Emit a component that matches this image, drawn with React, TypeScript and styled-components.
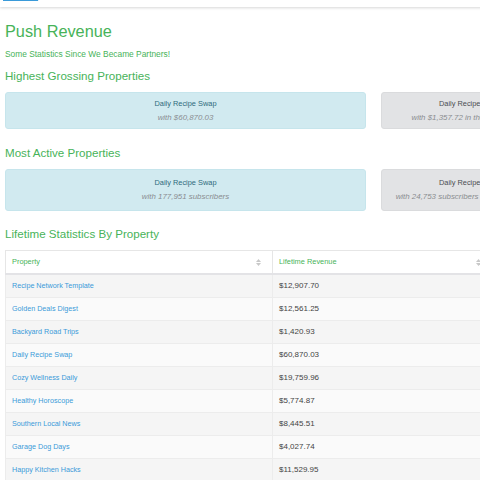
import React from 'react';
import styled, { createGlobalStyle } from 'styled-components';

const GlobalStyle = createGlobalStyle`
  html, body {
    margin: 0;
    padding: 0;
    background: #ffffff;
    overflow: hidden;
  }
  body {
    font-family: 'Liberation Sans', Arial, sans-serif;
    color: #333;
  }
`;

const Page = styled.div`
  width: 1200px;
`;

const NavBar = styled.div`
  height: 7px;
  padding-left: 3px;
  background: #fff;
  box-shadow: 0 1px 3px rgba(0, 0, 0, 0.16);
  overflow: hidden;
`;

const NavLink = styled.a`
  display: block;
  margin-top: -7px;
  font-size: 8px;
  line-height: 8px;
  color: #3a9ad9;
  text-decoration: underline;
`;

const Content = styled.div`
  padding: 14px 5px 0 5px;
`;

const Title = styled.h1`
  margin: 0;
  font-size: 16.3px;
  font-weight: 400;
  color: #47b359;
  line-height: 20px;
`;

const Subtitle = styled.p`
  margin: 8px 0 0;
  font-size: 8.4px;
  line-height: 11px;
  color: #47b359;
`;

const SectionTitle = styled.h3<{ gap: number }>`
  margin: ${({ gap }) => gap}px 0 0;
  font-size: 11.6px;
  font-weight: 400;
  color: #47b359;
  line-height: 16px;
`;

const CardRow = styled.div`
  display: grid;
  grid-template-columns: 361px 178px 178px;
  column-gap: 15px;
  margin-top: 8px;
`;

const Card = styled.div<{ tone: 'info' | 'muted'; tall?: boolean }>`
  background: ${({ tone }) => (tone === 'info' ? '#d1eaf0' : '#e2e3e5')};
  border: 1px solid ${({ tone }) => (tone === 'info' ? '#c6e5ec' : '#dadbdd')};
  border-radius: 3px;
  height: ${({ tall }) => (tall ? '40px' : '35px')};
  display: flex;
  flex-direction: column;
  align-items: center;
  justify-content: center;
  gap: 4px;
  text-align: center;
`;

const CardName = styled.div<{ tone: 'info' | 'muted' }>`
  font-size: 7.4px;
  line-height: 10px;
  color: ${({ tone }) => (tone === 'info' ? '#2f6a7c' : '#4a4e52')};
  white-space: nowrap;
`;

const CardNote = styled.div`
  font-size: 7.9px;
  line-height: 10px;
  font-style: italic;
  color: #8a8d90;
  white-space: nowrap;
`;

const Table = styled.table`
  margin-top: 8px;
  border-collapse: collapse;
  table-layout: fixed;
  width: 787px;
  font-size: 8px;
`;

const HeadCell = styled.th<{ width: number }>`
  box-sizing: border-box;
  width: ${({ width }) => width}px;
  height: 23px;
  padding: 0 6px;
  text-align: left;
  font-size: 7.4px;
  font-weight: 400;
  color: #47b359;
  background: #fff;
  border-top: 1px solid #e6e6e6;
  border-left: 1px solid #e6e6e6;
  border-bottom: 2px solid #e3e3e6;
  position: relative;
`;

const SortIcon = styled.span`
  position: absolute;
  right: 11px;
  top: 8px;
  display: flex;
  flex-direction: column;
  gap: 1px;
`;

const Row = styled.tr<{ odd: boolean }>`
  background: ${({ odd }) => (odd ? '#f5f5f5' : '#fafafa')};
`;

const Cell = styled.td`
  height: 22px;
  padding: 0 6px;
  border-left: 1px solid #ececec;
  border-bottom: 1px solid #ececec;
  color: #444;
  white-space: nowrap;
`;

const PropLink = styled.a`
  font-size: 7.2px;
  color: #3a9ad9;
  text-decoration: none;
`;

const Arrows = () => (
  <SortIcon>
    <svg width="5" height="3" viewBox="0 0 5 3">
      <path d="M0 3 L2.5 0 L5 3 Z" fill="#c8c8c8" />
    </svg>
    <svg width="5" height="3" viewBox="0 0 5 3">
      <path d="M0 0 L2.5 3 L5 0 Z" fill="#c8c8c8" />
    </svg>
  </SortIcon>
);

const grossing = [
  { tone: 'info' as const, name: 'Daily Recipe Swap', note: 'with $60,870.03' },
  { tone: 'muted' as const, name: 'Daily Recipe Swap', note: 'with $1,357.72 in the last 30 days' },
];

const active = [
  { tone: 'info' as const, name: 'Daily Recipe Swap', note: 'with 177,951 subscribers' },
  { tone: 'muted' as const, name: 'Daily Recipe Swap', note: 'with 24,753 subscribers in the last 30 days' },
];

const properties = [
  ['Recipe Network Template', '$12,907.70', '182,114'],
  ['Golden Deals Digest', '$12,561.25', '96,402'],
  ['Backyard Road Trips', '$1,420.93', '12,388'],
  ['Daily Recipe Swap', '$60,870.03', '177,951'],
  ['Cozy Wellness Daily', '$19,759.96', '74,230'],
  ['Healthy Horoscope', '$5,774.87', '31,805'],
  ['Southern Local News', '$8,445.51', '40,117'],
  ['Garage Dog Days', '$4,027.74', '22,659'],
  ['Happy Kitchen Hacks', '$11,529.95', '63,478'],
  ['Morning Money Tips', '$3,218.40', '18,902'],
];

export default function App() {
  return (
    <Page>
      <GlobalStyle />
      <NavBar>
        <NavLink href="#">‹ Partners</NavLink>
      </NavBar>
      <Content>
        <Title>Push Revenue</Title>
        <Subtitle>Some Statistics Since We Became Partners!</Subtitle>

        <SectionTitle gap={8}>Highest Grossing Properties</SectionTitle>
        <CardRow>
          {grossing.map((c) => (
            <Card key={c.note} tone={c.tone}>
              <CardName tone={c.tone}>{c.name}</CardName>
              <CardNote>{c.note}</CardNote>
            </Card>
          ))}
        </CardRow>

        <SectionTitle gap={16}>Most Active Properties</SectionTitle>
        <CardRow>
          {active.map((c) => (
            <Card key={c.note} tone={c.tone} tall>
              <CardName tone={c.tone}>{c.name}</CardName>
              <CardNote>{c.note}</CardNote>
            </Card>
          ))}
        </CardRow>

        <SectionTitle gap={15}>Lifetime Statistics By Property</SectionTitle>
        <Table>
          <thead>
            <tr>
              <HeadCell width={267}>
                Property
                <Arrows />
              </HeadCell>
              <HeadCell width={220}>
                Lifetime Revenue
                <Arrows />
              </HeadCell>
              <HeadCell width={300}>
                Subscribers
                <Arrows />
              </HeadCell>
            </tr>
          </thead>
          <tbody>
            {properties.map(([name, revenue, subs], i) => (
              <Row key={name} odd={i % 2 === 0}>
                <Cell>
                  <PropLink href="#">{name}</PropLink>
                </Cell>
                <Cell>{revenue}</Cell>
                <Cell>{subs}</Cell>
              </Row>
            ))}
          </tbody>
        </Table>
      </Content>
    </Page>
  );
}
